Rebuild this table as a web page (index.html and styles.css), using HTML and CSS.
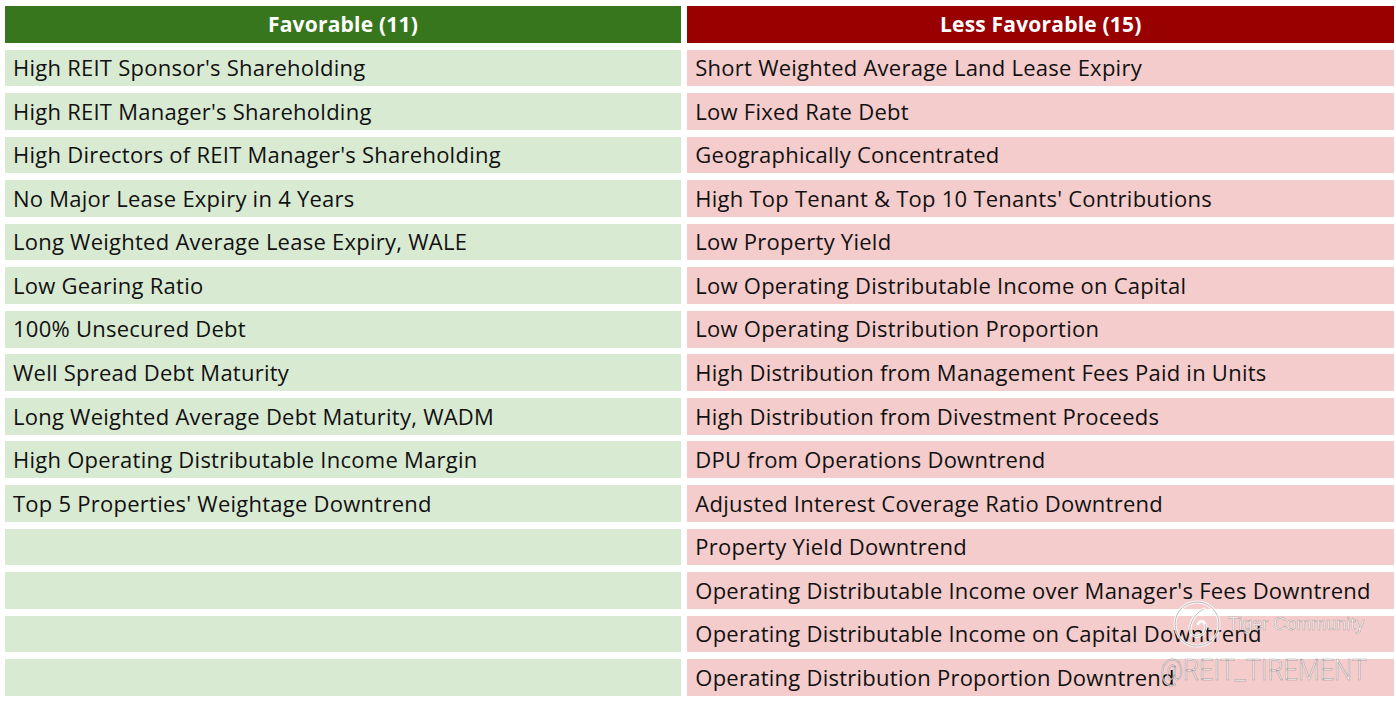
FILE: index.html
```html
<!DOCTYPE html>
<html>
<head>
<meta charset="utf-8">
<link rel="stylesheet" href="styles.css">
</head>
<body>
<div class="table">
  <div class="head fav">Favorable (11)</div>
  <div class="head less">Less Favorable (15)</div>

  <div class="cell g">High REIT Sponsor's Shareholding</div>
  <div class="cell r">Short Weighted Average Land Lease Expiry</div>
  <div class="cell g">High REIT Manager's Shareholding</div>
  <div class="cell r">Low Fixed Rate Debt</div>
  <div class="cell g">High Directors of REIT Manager's Shareholding</div>
  <div class="cell r">Geographically Concentrated</div>
  <div class="cell g">No Major Lease Expiry in 4 Years</div>
  <div class="cell r">High Top Tenant &amp; Top 10 Tenants' Contributions</div>
  <div class="cell g">Long Weighted Average Lease Expiry, WALE</div>
  <div class="cell r">Low Property Yield</div>
  <div class="cell g">Low Gearing Ratio</div>
  <div class="cell r">Low Operating Distributable Income on Capital</div>
  <div class="cell g">100% Unsecured Debt</div>
  <div class="cell r">Low Operating Distribution Proportion</div>
  <div class="cell g">Well Spread Debt Maturity</div>
  <div class="cell r">High Distribution from Management Fees Paid in Units</div>
  <div class="cell g">Long Weighted Average Debt Maturity, WADM</div>
  <div class="cell r">High Distribution from Divestment Proceeds</div>
  <div class="cell g">High Operating Distributable Income Margin</div>
  <div class="cell r">DPU from Operations Downtrend</div>
  <div class="cell g">Top 5 Properties' Weightage Downtrend</div>
  <div class="cell r">Adjusted Interest Coverage Ratio Downtrend</div>
  <div class="cell g"></div>
  <div class="cell r">Property Yield Downtrend</div>
  <div class="cell g"></div>
  <div class="cell r">Operating Distributable Income over Manager's Fees Downtrend</div>
  <div class="cell g"></div>
  <div class="cell r">Operating Distributable Income on Capital Downtrend</div>
  <div class="cell g"></div>
  <div class="cell r">Operating Distribution Proportion Downtrend</div>
</div>

<div class="watermark">
  <div class="wm-top">
    <svg class="wm-logo" width="50" height="50" viewBox="0 0 50 50">
      <circle cx="25" cy="25" r="22" fill="none" stroke="rgba(255,255,255,0.8)" stroke-width="3"/>
      <circle cx="25" cy="25" r="22" fill="none" stroke="rgba(110,110,110,0.45)" stroke-width="1"/>
      <path d="M32 10 C25 13 20 20 18 28 C17 34 21 39 27 37 C33 35 35 29 33 25 C31 21 27 22 26 25" fill="none" stroke="rgba(255,255,255,0.85)" stroke-width="3" stroke-linecap="round"/>
      <path d="M32 10 C25 13 20 20 18 28 C17 34 21 39 27 37 C33 35 35 29 33 25" fill="none" stroke="rgba(110,110,110,0.45)" stroke-width="1"/>
    </svg>
    <span class="wm-name">Tiger Community</span>
  </div>
  <div class="wm-handle">@REIT_TIREMENT</div>
</div>
</body>
</html>
```

FILE: styles.css
```css
html, body {
  margin: 0;
  padding: 0;
  background: #ffffff;
}

body {
  width: 1396px;
  height: 702px;
  position: relative;
  overflow: hidden;
  font-family: "Open Sans", "Noto Sans", sans-serif;
}

.table {
  display: grid;
  grid-template-columns: 676px 707px;
  grid-auto-rows: 36.7px;
  column-gap: 6.3px;
  row-gap: 6.87px;
  padding: 6px 0 0 5px;
}

.head {
  display: flex;
  align-items: center;
  justify-content: center;
  color: #ffffff;
  font-weight: 700;
  font-size: 21px;
  letter-spacing: 0.2px;
  padding-bottom: 1px;
}

.fav { background: #38761d; }
.less { background: #990000; }

.cell {
  display: flex;
  align-items: center;
  padding-left: 8px;
  padding-bottom: 1.5px;
  color: #111111;
  font-size: 22px;
  letter-spacing: 0.25px;
  white-space: nowrap;
}

.g { background: #d9ead3; }
.r { background: #f4cccc; }

.watermark {
  position: absolute;
  left: 1160px;
  top: 599px;
  width: 230px;
  pointer-events: none;
}

.wm-top {
  display: flex;
  align-items: center;
  gap: 6px;
  padding-left: 12px;
}

.wm-name {
  font-family: "Liberation Sans", sans-serif;
  font-size: 18px;
  color: rgba(255, 255, 255, 0.75);
  -webkit-text-stroke: 0.5px rgba(100, 100, 100, 0.55);
}

.wm-handle {
  display: inline-block;
  margin-top: 4px;
  font-family: Roboto, "Liberation Sans", sans-serif;
  font-weight: 300;
  font-size: 29px;
  color: rgba(255, 255, 255, 0.8);
  -webkit-text-stroke: 0.6px rgba(100, 100, 100, 0.6);
  transform: scaleX(0.87);
  transform-origin: left center;
}
```
